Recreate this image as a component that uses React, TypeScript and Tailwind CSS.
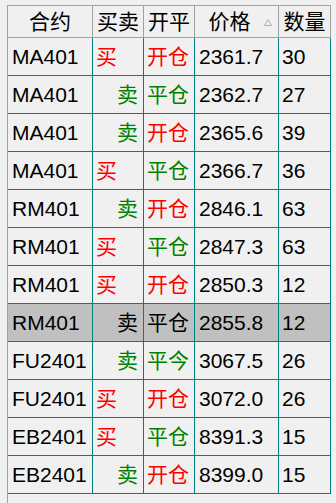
import React from "react";

type Order = {
  code: string;
  side: "买" | "卖";
  action: string;
  price: string;
  qty: number;
};

const orders: Order[] = [
  { code: "MA401", side: "买", action: "开仓", price: "2361.7", qty: 30 },
  { code: "MA401", side: "卖", action: "平仓", price: "2362.7", qty: 27 },
  { code: "MA401", side: "卖", action: "开仓", price: "2365.6", qty: 39 },
  { code: "MA401", side: "买", action: "平仓", price: "2366.7", qty: 36 },
  { code: "RM401", side: "卖", action: "开仓", price: "2846.1", qty: 63 },
  { code: "RM401", side: "买", action: "平仓", price: "2847.3", qty: 63 },
  { code: "RM401", side: "买", action: "开仓", price: "2850.3", qty: 12 },
  { code: "RM401", side: "卖", action: "平仓", price: "2855.8", qty: 12 },
  { code: "FU2401", side: "卖", action: "平今", price: "3067.5", qty: 26 },
  { code: "FU2401", side: "买", action: "开仓", price: "3072.0", qty: 26 },
  { code: "EB2401", side: "买", action: "平仓", price: "8391.3", qty: 15 },
  { code: "EB2401", side: "卖", action: "开仓", price: "8399.0", qty: 15 },
];

const SELECTED = 7;

const cols = "grid grid-cols-[85px_51px_51px_84px_52px]";
const headCell =
  "h-[32px] flex items-center justify-center border-r border-b border-[#a0a0a0]";
const bodyCell = "h-[38px] flex items-center border-r border-b border-[#008080]";

export default function App() {
  return (
    <div
      className="w-[336px] h-[503px] bg-[#f0f0f0] pt-[5px] pl-[7px] overflow-hidden text-black text-[21px] leading-none"
      style={{ fontFamily: '"Liberation Sans", "Noto Sans CJK SC", sans-serif' }}
    >
      <div className="h-full w-[324px] border-l border-[#a0a0a0]">
        {/* header */}
        <div className={`${cols} border-t border-[#a0a0a0]`}>
          <div className={headCell}>合约</div>
          <div className={headCell}>买卖</div>
          <div className={headCell}>开平</div>
          <div className={`${headCell} relative pr-[14px]`}>
            价格
            <svg
              className="absolute right-[6px] top-[13px]"
              width="8"
              height="7"
              viewBox="0 0 8 7"
            >
              <path d="M4 0.5 L7.5 6.5 L0.5 6.5 Z" fill="none" stroke="#b0b0b0" strokeWidth="1" />
            </svg>
          </div>
          <div className={headCell}>数量</div>
        </div>

        {/* rows */}
        {orders.map((o, i) => {
          const sel = i === SELECTED;
          const sideColor = sel ? "text-black" : o.side === "买" ? "text-[#ff0000]" : "text-[#008000]";
          const actColor = sel
            ? "text-black"
            : o.action === "开仓"
            ? "text-[#ff0000]"
            : "text-[#008000]";
          return (
            <div key={i} className={`${cols} ${sel ? "bg-[#c0c0c0]" : ""}`}>
              <div className={`${bodyCell} pl-[4px]`}>{o.code}</div>
              <div
                className={`${bodyCell} ${sideColor} ${
                  o.side === "买" ? "justify-start pl-[3px]" : "justify-end pr-[5px]"
                }`}
              >
                {o.side}
              </div>
              <div className={`${bodyCell} ${actColor} pl-[3px]`}>{o.action}</div>
              <div className={`${bodyCell} pl-[4px]`}>{o.price}</div>
              <div className={`${bodyCell} pl-[3px]`}>{o.qty}</div>
            </div>
          );
        })}
      </div>
    </div>
  );
}
